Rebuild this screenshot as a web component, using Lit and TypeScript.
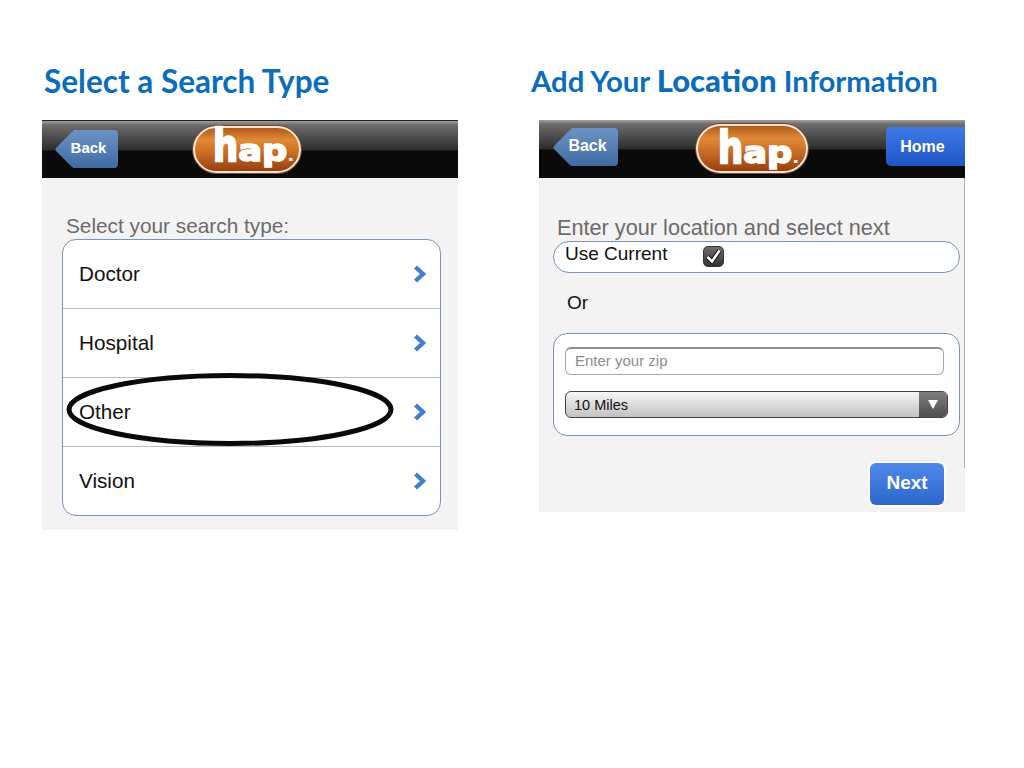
import { css, html, LitElement } from "lit";
import { customElement, property } from "lit/decorators.js";

const chevron = html`<svg class="chev" width="14" height="20" viewBox="0 0 14 20">
    <path d="M2.5 3 L10 10 L2.5 17" fill="none" stroke="#3f7fd0" stroke-width="4.4" />
</svg>`;

@customElement("hap-logo")
export class HapLogo extends LitElement {
    static styles = css`
        :host {
            display: block;
            position: relative;
        }

        .pill {
            position: absolute;
            inset: 0;
            border: 2px solid #f6e6d6;
            border-radius: 25px;
            background: linear-gradient(#b05a1c 0%, #e08a36 28%, #cc6f26 55%, #983f10 100%);
            box-shadow: 0 0 0 1px #7c4420;
        }

        .word {
            position: absolute;
            left: var(--word-left, 20px);
            top: var(--word-top, 9px);
            display: flex;
            align-items: baseline;
            font: bold 31px/30px "DejaVu Sans", sans-serif;
            letter-spacing: 0;
            color: #fff;
            -webkit-text-stroke: 1.6px #fff;
            transform-origin: 0 0;
            transform: scaleX(1.14);
        }

        .tall {
            display: inline-block;
            transform-origin: 50% 25px;
            transform: scaleY(1.42);
        }

        .dot {
            font-size: 16px;
            -webkit-text-stroke: 0;
        }
    `;

    render() {
        return html`<div class="pill"></div><div class="word"><span class="tall">h</span>ap<span class="dot">.</span></div>`;
    }
}

@customElement("nav-bar")
export class NavBar extends LitElement {
    static styles = css`
        :host {
            display: block;
        }

        .bar {
            position: relative;
            height: 58px;
            box-sizing: border-box;
            display: flex;
            align-items: flex-start;
            background: linear-gradient(#a0a0a0 0, #6d6d6d 4px, #2c2c2c 29px, #0a0a0a 30px, #0a0a0a 100%);
        }

        .bar.lined {
            border-top: 1px solid #222;
        }

        .back {
            position: relative;
            height: 38px;
            padding-bottom: 3px;
            box-sizing: border-box;
            display: flex;
            align-items: center;
            justify-content: center;
            background: linear-gradient(#6c93c4, #3f6aa3);
            border-radius: 0 4px 4px 0;
            color: #fff;
            font: bold 15px "Liberation Sans", sans-serif;
        }

        .back::before {
            content: "";
            position: absolute;
            left: -13.5px;
            top: 5.5px;
            width: 27px;
            height: 27px;
            transform: rotate(45deg);
            background: linear-gradient(135deg, #6c93c4, #3f6aa3);
            border-radius: 3px;
        }

        .back span {
            position: relative;
            margin-left: -14px;
        }

        hap-logo {
            position: absolute;
        }

        .home {
            position: absolute;
            right: 0;
            top: 7px;
            width: 79px;
            height: 39px;
            padding-right: 6px;
            box-sizing: border-box;
            display: flex;
            align-items: center;
            justify-content: center;
            background: linear-gradient(#3f7ae6, #1f55c6);
            border-radius: 5px 0 0 5px;
            color: #fff;
            font: bold 16px "Liberation Sans", sans-serif;
        }
    `;

    @property({ type: Boolean }) lined = false;
    @property({ type: Boolean }) home = false;
    @property({ type: String }) logo = "";
    @property({ type: String }) backPos = "";

    render() {
        return html`
            <div class="bar ${this.lined ? "lined" : ""}">
                <div class="back" style=${this.backPos}><span>Back</span></div>
                <hap-logo style=${this.logo}></hap-logo>
                ${this.home ? html`<div class="home">Home</div>` : ""}
            </div>
        `;
    }
}

@customElement("app-root")
export class AppRoot extends LitElement {
    static styles = css`
        :host {
            display: block;
            width: 1024px;
            height: 768px;
            background: #fff;
            font-family: "Liberation Sans", sans-serif;
        }

        .slide {
            display: grid;
            grid-template-columns: 416px 426px;
            column-gap: 81px;
            padding: 60px 0 0 42px;
        }

        h1 {
            margin: 0;
            height: 60px;
            font: bold 31.5px/42px Lato, sans-serif;
            color: #0b6dbb;
            white-space: nowrap;
        }

        h1.left {
            padding-left: 2px;
        }

        h1.right {
            margin-left: -8px;
            font-size: 29.3px;
            line-height: 41px;
        }

        h1 b {
            font-size: 31px;
        }

        .screen {
            background: #f3f3f3;
            position: relative;
        }

        .screen.one {
            height: 410px;
        }

        .screen.two {
            height: 392px;
        }

        .screen.two .edge {
            position: absolute;
            right: 0;
            top: 58px;
            bottom: 44px;
            width: 1px;
            background: #a9a9a9;
        }

        .body-one {
            padding: 35px 17px 0 20px;
        }

        .label {
            color: #6b6b6b;
            font-size: 20.8px;
            line-height: 26px;
            padding-left: 4px;
        }

        .list {
            background: #fff;
            border: 1px solid #7d93b2;
            border-radius: 14px;
        }

        .row {
            height: 69px;
            box-sizing: border-box;
            display: flex;
            align-items: center;
            justify-content: space-between;
            padding: 0 13px 0 16px;
            font-size: 20.7px;
            color: #111;
            border-top: 1px solid #b5bcc6;
        }

        .row:first-child {
            border-top: none;
            height: 68px;
        }

        .ellipse {
            position: absolute;
            left: 24px;
            top: 252px;
            pointer-events: none;
        }

        .body-two {
            padding: 37px 5px 0 14px;
        }

        .body-two .label {
            font-size: 21.7px;
        }

        .current {
            height: 32px;
            box-sizing: border-box;
            background: #fff;
            border: 1px solid #7d93b2;
            border-radius: 16px;
            display: flex;
            align-items: flex-start;
            padding-left: 11px;
            font-size: 19px;
            line-height: 24px;
            color: #111;
        }

        .check {
            margin: 4px 0 0 36px;
            width: 21px;
            height: 21px;
            box-sizing: border-box;
            border-radius: 5px;
            background: linear-gradient(#6e6e6e, #333);
            border: 1px solid #333;
            display: flex;
            align-items: center;
            justify-content: center;
        }

        .or {
            font-size: 19px;
            color: #111;
            line-height: 24px;
            margin: 18px 0 18px 14px;
        }

        .box {
            height: 103px;
            box-sizing: border-box;
            background: #fff;
            border: 1px solid #7d93b2;
            border-radius: 14px;
            padding: 13px 11px 0 11px;
        }

        .zip {
            width: 379px;
            height: 28px;
            box-sizing: border-box;
            border: 1px solid #a8a8a8;
            border-top: 2px solid #8f8f8f;
            border-radius: 6px;
            padding-left: 9px;
            font-size: 15px;
            line-height: 24px;
            color: #8c8c8c;
        }

        .select {
            margin-top: 16px;
            height: 27px;
            box-sizing: border-box;
            border: 1px solid #444;
            border-radius: 6px;
            display: flex;
            justify-content: space-between;
            overflow: hidden;
            background: linear-gradient(#f6f6f6, #c2c2c2);
        }

        .select span {
            padding-left: 8px;
            font-size: 14.5px;
            line-height: 27px;
            color: #111;
        }

        .arrow {
            width: 28px;
            display: flex;
            align-items: center;
            justify-content: center;
            background: linear-gradient(#7d7d7d, #4f4f4f);
        }

        .actions {
            display: flex;
            justify-content: flex-end;
            padding: 27px 16px 0 0;
        }

        .next {
            width: 74px;
            height: 42px;
            padding-bottom: 2px;
            box-sizing: border-box;
            display: flex;
            align-items: center;
            justify-content: center;
            border-radius: 6px;
            background: linear-gradient(#4f8aea, #2d66cc);
            color: #fff;
            font-weight: bold;
            font-size: 19px;
            box-shadow: 0 0 0 2px #fff;
        }
    `;

    render() {
        const rows = ["Doctor", "Hospital", "Other", "Vision"];
        return html`
            <div class="slide">
                <h1 class="left">Select a Search Type</h1>
                <h1 class="right">Add Your <b>Location</b> Information</h1>

                <div class="screen one">
                    <nav-bar
                        lined
                        logo="left:151px;top:5px;width:108px;height:47px;--word-left:20px;--word-top:9px"
                        backPos="margin:9px 0 0 31px;width:45px"
                    ></nav-bar>
                    <div class="body-one">
                        <div class="label">Select your search type:</div>
                        <div class="list">
                            ${rows.map((r) => html`<div class="row">${r}${chevron}</div>`)}
                        </div>
                    </div>
                    <svg class="ellipse" width="334" height="76" viewBox="0 0 334 76">
                        <ellipse cx="164" cy="37.5" rx="161" ry="34" fill="none" stroke="#0a0a0a" stroke-width="5" />
                    </svg>
                </div>

                <div class="screen two">
                    <nav-bar
                        home
                        logo="left:157px;top:4px;width:112px;height:49px;--word-left:22px;--word-top:13px"
                        backPos="margin:8px 0 0 32px;width:47px;font-size:16px"
                    ></nav-bar>
                    <div class="edge"></div>
                    <div class="body-two">
                        <div class="label">Enter your location and select next</div>
                        <div class="current">
                            Use Current
                            <div class="check">
                                <svg width="19" height="19" viewBox="0 0 19 19">
                                    <path d="M3.5 10 L8 14.5 L15.5 3.5" fill="none" stroke="#111" stroke-width="4.6" />
                                    <path d="M3.5 10 L8 14.5 L15.5 3.5" fill="none" stroke="#fff" stroke-width="2.6" />
                                </svg>
                            </div>
                        </div>
                        <div class="or">Or</div>
                        <div class="box">
                            <div class="zip">Enter your zip</div>
                            <div class="select">
                                <span>10 Miles</span>
                                <div class="arrow">
                                    <svg width="10" height="9" viewBox="0 0 10 9"><path d="M0 0 H10 L5 9 Z" fill="#fff" /></svg>
                                </div>
                            </div>
                        </div>
                        <div class="actions"><div class="next">Next</div></div>
                    </div>
                </div>
            </div>
        `;
    }
}
